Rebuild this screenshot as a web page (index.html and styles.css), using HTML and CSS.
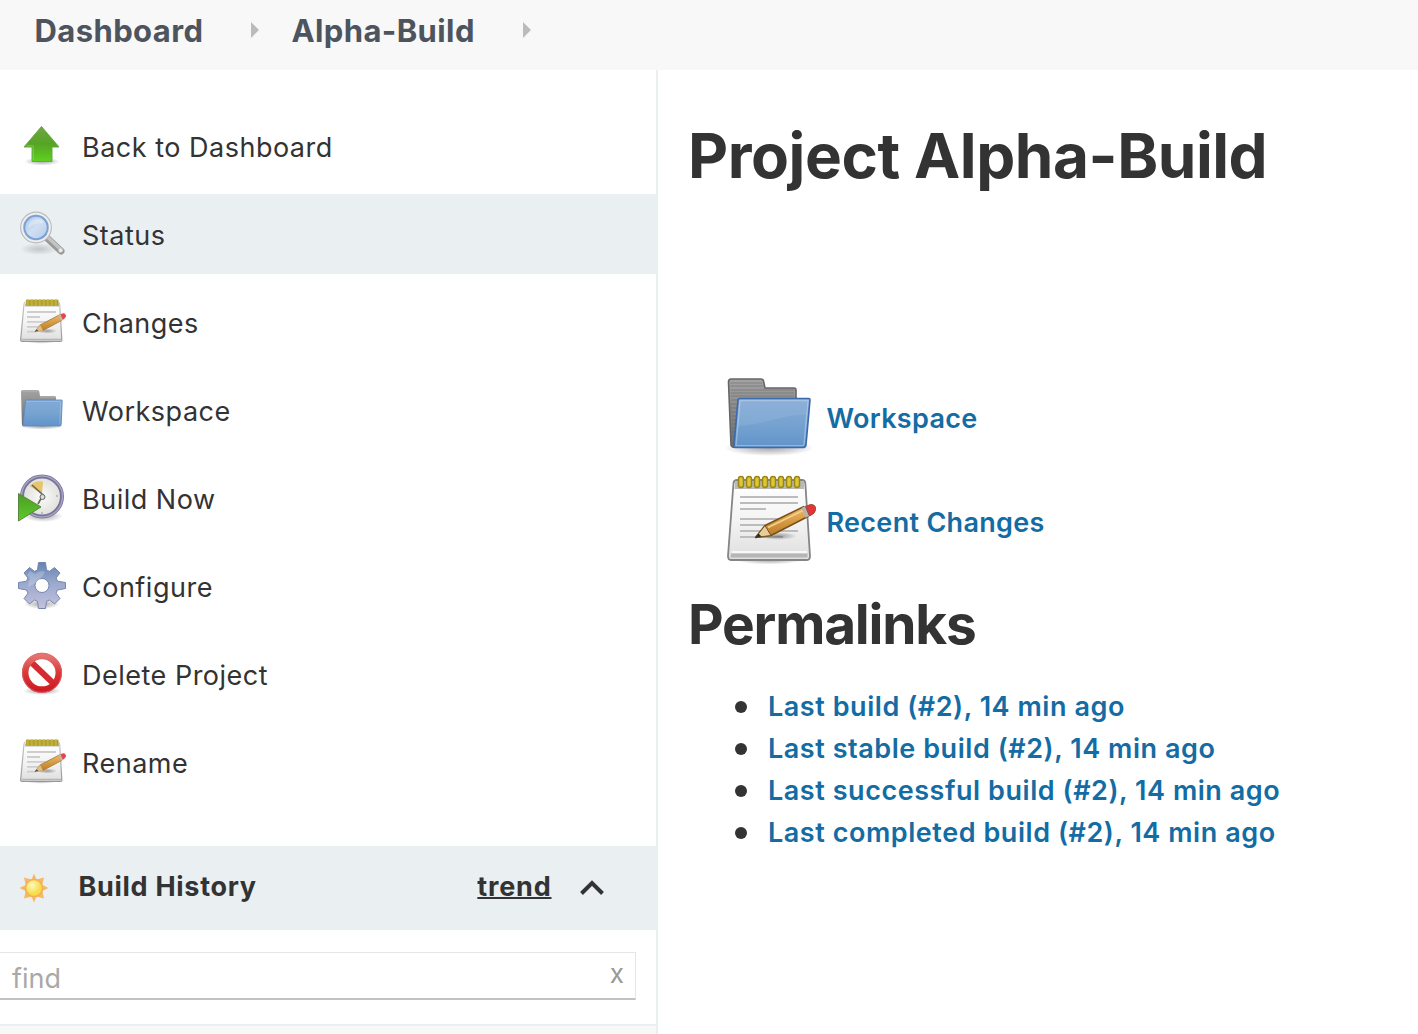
FILE: index.html
```html
<!DOCTYPE html>
<html lang="en">
<head>
<meta charset="utf-8">
<title>Alpha-Build</title>
<link rel="stylesheet" href="styles.css">
</head>
<body>
<svg class="defs" width="0" height="0" aria-hidden="true">
  <defs>
    <linearGradient id="greenFill" x1="0" y1="0" x2="0" y2="1"><stop offset="0" stop-color="#6fa545"/><stop offset=".5" stop-color="#56a424"/><stop offset="1" stop-color="#5fd11f"/></linearGradient>
    <linearGradient id="playFill" x1="0" y1="0" x2="0" y2="1"><stop offset="0" stop-color="#4d9c25"/><stop offset="1" stop-color="#5ccb28"/></linearGradient>
    <linearGradient id="folderFront" x1="0" y1="0" x2="0" y2="1"><stop offset="0" stop-color="#83aad6"/><stop offset=".5" stop-color="#77a3d1"/><stop offset="1" stop-color="#6194c9"/></linearGradient>
    <linearGradient id="folderBack" x1="0" y1="0" x2="0" y2="1"><stop offset="0" stop-color="#a3a3a3"/><stop offset="1" stop-color="#6c6c6c"/></linearGradient>
    <linearGradient id="paper" x1="0" y1="0" x2="0" y2="1"><stop offset="0" stop-color="#ffffff"/><stop offset=".5" stop-color="#f4f4f4"/><stop offset="1" stop-color="#dedede"/></linearGradient>
    <linearGradient id="paperEdge" x1="0" y1="0" x2="0" y2="1"><stop offset="0" stop-color="#c9c9c9"/><stop offset="1" stop-color="#989898"/></linearGradient>
    <linearGradient id="gearFill" x1="0" y1="0" x2="0" y2="1"><stop offset="0" stop-color="#6583b0"/><stop offset=".45" stop-color="#9aa9cd"/><stop offset="1" stop-color="#c5c1dc"/></linearGradient>
    <linearGradient id="redFill" x1="0" y1="0" x2="0" y2="1"><stop offset="0" stop-color="#e47372"/><stop offset=".5" stop-color="#d93838"/><stop offset="1" stop-color="#cf1c24"/></linearGradient>
    <linearGradient id="wood" x1="0" y1="0" x2="0" y2="1"><stop offset="0" stop-color="#f0ba67"/><stop offset="1" stop-color="#b87720"/></linearGradient>
    <linearGradient id="lens" x1="0" y1="0" x2="1" y2="1"><stop offset="0" stop-color="#a9c6ea"/><stop offset=".5" stop-color="#d0dff2"/><stop offset="1" stop-color="#b3cbe9"/></linearGradient>
    <radialGradient id="shade"><stop offset="0" stop-color="#000" stop-opacity=".34"/><stop offset=".6" stop-color="#000" stop-opacity=".15"/><stop offset="1" stop-color="#000" stop-opacity="0"/></radialGradient>
    <radialGradient id="dial"><stop offset="0" stop-color="#fbfbfa"/><stop offset="1" stop-color="#dededb"/></radialGradient>
    <radialGradient id="sunCore" cx=".4" cy=".35"><stop offset="0" stop-color="#fff8c0"/><stop offset="1" stop-color="#f7dc46"/></radialGradient>

    <symbol id="notepad-small" viewBox="0 0 48 48">
      <ellipse cx="23" cy="43" rx="16" ry="2.800" fill="url(#shade)"/>
      <path d="M7.500 4H40Q41.500 4 41.700 6L43.800 41.500Q44 43.500 42.500 43.500H4Q2.500 43.500 2.700 41.500L6 6Q6.200 4 7.500 4Z" fill="url(#paper)" stroke="url(#paperEdge)" stroke-width="1.200"/>
      <path d="M3.500 41.700H43" stroke="#b5b5b5" stroke-width="1.800"/>
      <path d="M7 5.500H41V8.500H7Z" fill="#bdbdb4"/>
      <path d="M8 4.800H40.500" stroke="#a99a3c" stroke-width="6"/>
      <path d="M8.500 4.800H40.500" stroke="#c4b233" stroke-width="6.500" stroke-dasharray="2.400 1.600"/>
      <path d="M9 14H38M9 19H22M9 23.800H34M9 28.800H22M9 33.700H18" stroke="#cecece" stroke-width="1.800"/>
      <ellipse cx="29" cy="33" rx="10" ry="2.500" fill="url(#shade)"/>
      <path d="M17 33.500L22 27L41.500 16.800L44 22.300L25 32.500Z" fill="url(#wood)" stroke="#a57b3b" stroke-width=".8" stroke-linejoin="round"/>
      <path d="M17 33.500L22 27L25 32.500Z" fill="#dcc08a"/>
      <path d="M16.700 33.800L18.800 31.300L20.300 32.800Z" fill="#594830"/>
      <path d="M40.500 17.300L43 16L45.500 21.500L43 22.800Z" fill="#c2b6ad"/>
      <path d="M42.500 16.300L45 15.300Q48 15.300 47.900 18.300Q47.500 20.500 44.800 21.800Z" fill="#e2484b"/>
    </symbol>

    <symbol id="folder-small" viewBox="0 0 48 48">
      <ellipse cx="24" cy="40.500" rx="22" ry="3" fill="url(#shade)"/>
      <path d="M4.500 4H19.500Q21 4 21.300 5.500L22 10H36.500Q38 10 38 11.500V20L8 40H5.500Q4 40 3.900 38.500L3 5.500Q3 4 4.500 4Z" fill="url(#folderBack)"/>
      <path d="M4 5H20M22 11H37" stroke="#b5b5b5" stroke-width="1"/>
      <path d="M8.500 14H43.500Q44.300 14 44.200 15L43.200 38.500Q43.100 40 41.800 40H5.500Q4.800 40 5 39L7.500 15Q7.600 14 8.500 14Z" fill="url(#folderFront)" stroke="#5a8ac1" stroke-width=".9"/>
      <path d="M8.500 15.300H43M42.800 16L41.800 38.500" fill="none" stroke="#fff" stroke-opacity=".22"/>
    </symbol>

    <symbol id="folder" viewBox="0 0 96 96">
      <ellipse cx="49" cy="78" rx="45" ry="8" fill="url(#shade)"/>
      <path d="M11 9H41Q43 9 43.500 11L45 18H74Q76 18 76 20V34L16 77Q12 78 11 75L8.500 12Q8.500 9 11 9Z" fill="url(#folderBack)" stroke="#666" stroke-width="1.600"/>
      <path d="M10.500 13H42M10.500 16H43M11 20H74M11 23H74M11 26H74M11 30H18M11 34H18M11 38H18M11 42H17M12 46H17M12 50H17M12 54H16M12 58H16M12 62H16M12 66H15" stroke="#555" stroke-opacity=".4" stroke-width="1"/>
      <path d="M20 28.500H89Q90 28.500 90 30L86 75Q85.500 77.500 83 77.500H15Q13.500 77.500 14 75L18 30Q18.200 28.500 20 28.500Z" fill="url(#folderFront)" stroke="#3b6aad" stroke-width="1.600"/>
      <path d="M20 30.500H88L84 74.500Q84 75.600 82 75.600H16Z" fill="none" stroke="#fff" stroke-opacity=".3" stroke-width="1.400"/>
      <path d="M20 31H87L85.500 45C64 44 44 55 17.500 56Z" fill="#fff" opacity=".08"/>
    </symbol>

    <symbol id="notepad" viewBox="0 0 96 96">
      <ellipse cx="49" cy="86" rx="33" ry="4.500" fill="url(#shade)"/>
      <path d="M17 6H82Q85 6 85.300 9L90 82Q90 86 87 86H11Q8 86 8 82L13.500 9Q14 6 17 6Z" fill="url(#paper)" stroke="#858585" stroke-width="1.800"/>
      <path d="M15 7H84V15H14.500Z" fill="#b9b9b5"/>
      <path d="M11 79.500H87.500V83.500H10.500Z" fill="#b6b6b6"/>
      <path d="M11.500 78H87" stroke="#fff" stroke-width="1.500"/>
      <path d="M20 23H78M20 29H78M20 35H46M20 45H78M20 51H62M20 57H78M20 63H63" stroke="#bcbcbc" stroke-width="2"/>
      <g fill="#dbc738" stroke="#9c8611" stroke-width="1.500">
        <rect x="18.500" y="2.500" width="5" height="11" rx="2.500"/><rect x="26.500" y="2.500" width="5" height="11" rx="2.500"/><rect x="34.500" y="2.500" width="5" height="11" rx="2.500"/><rect x="42.500" y="2.500" width="5" height="11" rx="2.500"/><rect x="50.500" y="2.500" width="5" height="11" rx="2.500"/><rect x="58.500" y="2.500" width="5" height="11" rx="2.500"/><rect x="66.500" y="2.500" width="5" height="11" rx="2.500"/><rect x="74.500" y="2.500" width="5" height="11" rx="2.500"/>
      </g>
      <ellipse cx="58" cy="62" rx="19" ry="4" fill="url(#shade)"/>
      <path d="M35.500 63.500L45 51.500L84 32.500L88 42.500L51 61.500Z" fill="url(#wood)" stroke="#78501a" stroke-width="1.500" stroke-linejoin="round"/>
      <path d="M35.500 63.500L45 51.500L51 61.500Z" fill="#e7cf9d" stroke="#78501a" stroke-width="1"/>
      <path d="M35 64L38.500 59.500L41.500 62.500Z" fill="#382a18"/>
      <path d="M48 53.500L83 36.500" stroke="#f6d18b" stroke-width="1.600"/>
      <path d="M81.500 34L86 31.600L90.500 41.200L85.500 43.700Z" fill="#b8b3b0"/>
      <path d="M85.500 32.500L90.500 30.500Q96 30.500 95.700 35.500Q95.300 39.500 89.500 42Z" fill="#e5343a" stroke="#914b34" stroke-width="1"/>
    </symbol>
  </defs>
</svg>

<header class="breadcrumbs">
  <a class="crumb">Dashboard</a><span class="crumb-arrow"></span>
  <a class="crumb">Alpha-Build</a><span class="crumb-arrow"></span>
</header>

<div class="page">
  <aside class="sidebar">
    <nav class="tasks">
      <a class="task">
        <svg class="icon" viewBox="0 0 48 48"><ellipse cx="24" cy="39.500" rx="18" ry="4" fill="url(#shade)"/><path d="M23.500 4.500L41 25H34V39.500H14V25H6Z" fill="url(#greenFill)" stroke="#5fa53c" stroke-width=".9" stroke-linejoin="round"/><path d="M15.200 38.300V23.800H8.700" fill="none" stroke="#a5df80" stroke-opacity=".5"/></svg>
        <span>Back to Dashboard</span>
      </a>
      <a class="task active">
        <svg class="icon" viewBox="0 0 48 48"><ellipse cx="21" cy="39" rx="19" ry="6" fill="url(#shade)" opacity=".5"/><path d="M29 28L43 41" stroke="#999" stroke-width="7" stroke-linecap="round"/><path d="M30 27.500L43.500 40" stroke="#c4c4c4" stroke-width="3.500" stroke-linecap="round"/><circle cx="42.500" cy="40.500" r="2" fill="#e8e8e8"/><circle cx="18" cy="17.500" r="14.500" fill="none" stroke="#bababa" stroke-width="2.800"/><circle cx="18" cy="17.500" r="13.800" fill="none" stroke="#eee" stroke-width="2"/><circle cx="18" cy="17.500" r="11.700" fill="url(#lens)" stroke="#7ba1d5" stroke-width="2"/><path d="M10 18Q10 10 18 9Q25 9 25 13Q16 13 10 18Z" fill="#fff" opacity=".3"/></svg>
        <span>Status</span>
      </a>
      <a class="task"><svg class="icon" viewBox="0 0 48 48"><use href="#notepad-small" width="48" height="48"/></svg><span>Changes</span></a>
      <a class="task"><svg class="icon" viewBox="0 0 48 48"><use href="#folder-small" width="48" height="48"/></svg><span>Workspace</span></a>
      <a class="task">
        <svg class="icon" viewBox="0 0 48 48"><ellipse cx="25" cy="42" rx="20" ry="6" fill="url(#shade)"/><circle cx="24" cy="22.500" r="20" fill="url(#dial)" stroke="#77739c" stroke-width="4"/><circle cx="24" cy="22.500" r="20.500" fill="none" stroke="#a6a4be" stroke-width="1.500"/><path d="M24 20L11.500 12Q17 6 25 7.500Z" fill="#e8c568"/><path d="M14 11L25 21L20 30" fill="none" stroke="#66665f" stroke-width="1.600"/><circle cx="24.500" cy="23" r="2.500" fill="#ddd" stroke="#66665f"/><path d="M24 38V40M38 22H40" stroke="#999"/><path d="M.5 19.500L23 33L.5 47Z" fill="url(#playFill)" stroke="#58883e"/></svg>
        <span>Build Now</span>
      </a>
      <a class="task">
        <svg class="icon" viewBox="0 0 48 48"><ellipse cx="24" cy="42" rx="18" ry="5" fill="url(#shade)"/><path fill="url(#gearFill)" stroke="#7487b0" stroke-width="1" stroke-linejoin="round" fill-rule="evenodd" d="M20.500 .5H27.500L28.500 8L31.500 9.300L36.500 5.500L42 11L38 16L39.500 19.200L47.500 20.500V26.500L39.500 28L38 31.200L42 36.500L36.500 42L31.500 38L28.500 39.300L27.500 46.500H20.500L19.500 39.300L16.500 38L11.500 42L6 36.500L10 31.200L8.500 28L.5 26.500V20.500L8.500 19.200L10 16L6 11L11.500 5.500L16.500 9.300L19.500 8ZM24 16.500A7 7 0 1 0 24 30.500A7 7 0 1 0 24 16.500Z"/><path d="M9 13L12 9L17 12Q22 8 27 10Q23 19 10 25Q11 17 12 17Z" fill="#fff" opacity=".22"/></svg>
        <span>Configure</span>
      </a>
      <a class="task">
        <svg class="icon" viewBox="0 0 48 48"><ellipse cx="24" cy="41" rx="19" ry="4" fill="url(#shade)"/><path d="M12 11L36 34" stroke="#d52a30" stroke-width="6"/><circle cx="24" cy="22.800" r="16.800" fill="none" stroke="url(#redFill)" stroke-width="6.500"/><circle cx="24" cy="22.800" r="19.500" fill="none" stroke="#e06a6a" stroke-opacity=".7"/></svg>
        <span>Delete Project</span>
      </a>
      <a class="task"><svg class="icon" viewBox="0 0 48 48"><use href="#notepad-small" width="48" height="48"/></svg><span>Rename</span></a>
    </nav>

    <section class="history">
      <div class="history-head">
        <svg class="sun" viewBox="0 0 32 32"><path d="M16 1.500L18.500 7.500L26 5.500L24.300 13L30.500 16L24.300 19L26 26.500L18.500 24.500L16 30.500L13.500 24.500L6 26.500L7.700 19L1.500 16L7.700 13L6 5.500L13.500 7.500Z" fill="#f6b867"/><circle cx="16" cy="16" r="8.500" fill="url(#sunCore)" stroke="#f3b058" stroke-width="1.500"/></svg>
        <span class="history-title">Build History</span>
        <a class="trend">trend</a>
        <svg class="chevron" viewBox="0 0 24 16"><path d="M1.500 13.500L12 3L22.500 13.500" fill="none" stroke="#333" stroke-width="4"/></svg>
      </div>
      <div class="find-box"><span class="placeholder">find</span><span class="clear">x</span></div>
      <div class="history-foot"></div>
    </section>
  </aside>

  <main class="content">
    <h1>Project Alpha-Build</h1>
    <div class="shortcuts">
      <div class="shortcut"><svg class="icon-large" viewBox="0 0 96 96"><use href="#folder" width="96" height="96"/></svg><a class="link">Workspace</a></div>
      <div class="shortcut"><svg class="icon-large" viewBox="0 0 96 96"><use href="#notepad" width="96" height="96"/></svg><a class="link">Recent Changes</a></div>
    </div>
    <h2>Permalinks</h2>
    <ul class="permalinks">
      <li><a class="link">Last build (#2), 14 min ago</a></li>
      <li><a class="link">Last stable build (#2), 14 min ago</a></li>
      <li><a class="link">Last successful build (#2), 14 min ago</a></li>
      <li><a class="link">Last completed build (#2), 14 min ago</a></li>
    </ul>
  </main>
</div>
</body>
</html>
```
FILE: styles.css
```css
* { box-sizing: border-box; }

body {
  margin: 0;
  height: 1034px;
  overflow: hidden;
  display: flex;
  flex-direction: column;
  background: #fff;
  color: #333;
  font-family: Inter, "Liberation Sans", sans-serif;
  font-size: 27px;
}

.defs { display: block; flex: none; height: 0; }

.breadcrumbs {
  flex: none;
  display: flex;
  align-items: center;
  height: 70px;
  padding: 0 0 10px 34.5px;
  background: #f8f8f8;
}

.crumb {
  color: #4d545d;
  font-size: 31px;
  font-weight: 700;
  letter-spacing: .4px;
}

.crumb-arrow {
  margin: 0 32px 0 48px;
  border: solid transparent;
  border-width: 8px 0 8px 8px;
  border-left-color: #bbb;
}

.page { flex: 1; display: flex; min-height: 0; }

.sidebar {
  flex: none;
  width: 658px;
  border-right: 2px solid #eaeff2;
}

.tasks {
  display: flex;
  flex-direction: column;
  gap: 8px;
  padding-top: 36px;
}

.task {
  display: flex;
  align-items: center;
  gap: 16px;
  height: 80px;
  padding-left: 18px;
  letter-spacing: .5px;
}

.task span { padding-top: 2px; }
.task.active { background: #eaeff2; }

.icon { width: 48px; height: 48px; flex: none; }

.history { margin-top: 44px; }

.history-head {
  display: flex;
  align-items: center;
  height: 84px;
  padding: 0 52px 4px 18px;
  background: #eaeff2;
  font-weight: 700;
  letter-spacing: .7px;
}

.sun { width: 32px; height: 32px; margin-top: 4px; }
.history-title { margin-left: 28.5px; }
.trend {
  margin-left: auto;
  letter-spacing: .8px;
  text-decoration: underline;
  text-decoration-thickness: 2px;
}
.chevron { width: 24px; height: 16px; margin: 4px 0 0 28.5px; }

.find-box {
  display: flex;
  align-items: center;
  justify-content: space-between;
  width: 636px;
  height: 48px;
  margin: 22px 0 24px;
  padding: 6px 11px 0 12px;
  border: 1px solid #e6e6e6;
  border-left: 0;
  border-bottom: 2px solid #c2c2c2;
}

.placeholder { color: #a9a9a9; }
.clear { color: #999; font-size: 26px; margin-top: -10px; }
.history-foot { height: 10px; background: #f8f8f8; border-top: 2px solid #eaeff2; }

.content { flex: 1; padding-left: 30px; }

h1, h2 { margin: 0; font-weight: 700; }
h1 { margin-top: 46px; font-size: 62px; line-height: 80px; letter-spacing: -.44px; }
h2 { margin-top: 19px; font-size: 55px; line-height: 70px; letter-spacing: -1.2px; }

.shortcuts {
  display: flex;
  flex-direction: column;
  gap: 8px;
  margin: 174px 0 0 32px;
}

.shortcut { display: flex; align-items: center; gap: 10.5px; letter-spacing: .3px; }
.icon-large { width: 96px; height: 96px; flex: none; }
.link { color: #146ca4; font-weight: 600; }

.permalinks {
  margin: 27px 0 0;
  padding-left: 47px;
  list-style: none;
  line-height: 42px;
  letter-spacing: .55px;
}

.permalinks li { display: flex; align-items: center; gap: 21px; }

.permalinks li::before {
  content: "";
  width: 12px;
  height: 12px;
  border-radius: 50%;
  background: #333;
}
```
